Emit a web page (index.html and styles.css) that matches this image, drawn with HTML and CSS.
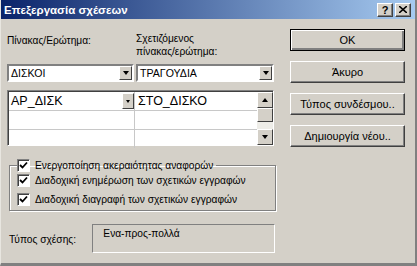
FILE: index.html
```html
<!DOCTYPE html>
<html lang="el">
<head>
  <meta charset="UTF-8" />
  <title>Επεξεργασία σχέσεων</title>
  <link rel="stylesheet" href="styles.css">
</head>
<body>
  <div class="window">
    <div class="titlebar">
      <span class="title">Επεξεργασία σχέσεων</span>
      <div class="caption-btns">
        <span class="cap-btn help">?</span>
        <span class="cap-btn close">
          <svg width="8" height="7" viewBox="0 0 8 7"><path d="M0 0 L8 7 M8 0 L0 7" stroke="#000" stroke-width="1.6"/></svg>
        </span>
      </div>
    </div>

    <div class="content">
      <div class="left">
        <div class="labels">
          <div class="col1 lbl first">Πίνακας/Ερώτημα:</div>
          <div class="col2 lbl">Σχετιζόμενος<br>πίνακας/ερώτημα:</div>
        </div>

        <div class="combos">
          <div class="combo col1"><span>ΔΙΣΚΟΙ</span><span class="drop"><i></i></span></div>
          <div class="combo col2"><span>ΤΡΑΓΟΥΔΙΑ</span><span class="drop"><i></i></span></div>
        </div>

        <div class="grid">
          <div class="rows">
            <div class="row">
              <div class="cell c1">ΑΡ_ΔΙΣΚ<span class="mini-drop"><i></i></span></div>
              <div class="cell c2">ΣΤΟ_ΔΙΣΚΟ</div>
            </div>
            <div class="row">
              <div class="cell c1"></div>
              <div class="cell c2"></div>
            </div>
            <div class="row last">
              <div class="cell c1"></div>
              <div class="cell c2"></div>
            </div>
          </div>
          <div class="scroll">
            <span class="sb-btn"><i class="up"></i></span>
            <span class="sb-thumb"></span>
            <span class="sb-track"></span>
            <span class="sb-btn"><i></i></span>
          </div>
        </div>

        <fieldset class="group">
          <legend><span class="chk"><svg width="9" height="9" viewBox="0 0 9 9"><path d="M1 4 L3.5 6.5 L8 1.5" fill="none" stroke="#000" stroke-width="1.8"/></svg></span>Ενεργοποίηση ακεραιότητας αναφορών</legend>
          <div class="opt"><span class="chk"><svg width="9" height="9" viewBox="0 0 9 9"><path d="M1 4 L3.5 6.5 L8 1.5" fill="none" stroke="#000" stroke-width="1.8"/></svg></span>Διαδοχική ενημέρωση των σχετικών εγγραφών</div>
          <div class="opt"><span class="chk"><svg width="9" height="9" viewBox="0 0 9 9"><path d="M1 4 L3.5 6.5 L8 1.5" fill="none" stroke="#000" stroke-width="1.8"/></svg></span>Διαδοχική διαγραφή των σχετικών εγγραφών</div>
        </fieldset>

        <div class="type-row">
          <span class="type-lbl">Τύπος σχέσης:</span>
          <div class="type-box">Ενα-προς-πολλά</div>
        </div>
      </div>

      <div class="right">
        <div class="btn default">OK</div>
        <div class="btn">Άκυρο</div>
        <div class="btn">Τύπος συνδέσμου..</div>
        <div class="btn">Δημιουργία νέου..</div>
      </div>
    </div>
  </div>
</body>
</html>
```

FILE: styles.css
```css
body { margin: 0; font-family: "Liberation Sans", Arial, sans-serif; font-size: 10.2px; color: #000; }
.window { width: 417px; height: 266px; box-sizing: border-box; background: #d4d0c8; border-right: 2px solid #808080; border-bottom: 3px solid #808080; border-left: 1px solid #e8e6e0; overflow: hidden; }

.titlebar { height: 19px; display: flex; align-items: center; justify-content: space-between; background: linear-gradient(to right, #0a246a, #a6caf0); padding: 0 4px 0 3px; }
.title { color: #fff; font-weight: bold; font-size: 11.5px; }
.caption-btns { display: flex; gap: 2px; }
.cap-btn { width: 16px; height: 14px; box-sizing: border-box; background: #d4d0c8; border: 1px solid; border-color: #fff #404040 #404040 #fff; box-shadow: inset -1px -1px #808080; display: flex; align-items: center; justify-content: center; font-weight: bold; font-size: 11px; }

.content { display: flex; padding: 10px 0 0 6px; }
.left { width: 268px; padding-top: 3px; }
.right { margin-left: 15px; width: 115px; display: flex; flex-direction: column; gap: 10px; font-size: 11px; }

.labels { display: flex; height: 26px; line-height: 13px; }
.col1 { width: 127px; }
.col2 { width: 138px; margin-left: 2px; }
.lbl.first { padding-top: 2px; }

.combos { display: flex; margin-top: 6px; }
.combo { height: 18px; box-sizing: border-box; background: #fff; border: 2px solid; border-color: #808080 #fff #fff #808080; display: flex; align-items: center; justify-content: space-between; font-size: 10.6px; padding-left: 2px; }
.drop { width: 13px; height: 14px; box-sizing: border-box; background: #d4d0c8; border: 1px solid; border-color: #fff #404040 #404040 #fff; display: flex; align-items: center; justify-content: center; }
.drop i, .mini-drop i, .sb-btn i { width: 0; height: 0; border-left: 3.5px solid transparent; border-right: 3.5px solid transparent; border-top: 4px solid #000; }
.sb-btn i.up { border-top: 0; border-bottom: 4px solid #000; }

.grid { margin-top: 8px; width: 267px; height: 56px; box-sizing: border-box; background: #fff; border: 1px solid; border-color: #808080 #fff #fff #808080; box-shadow: inset 1px 1px #404040; display: flex; padding: 1px 0 0 1px; }
.rows { flex: 1; }
.row { display: flex; height: 18px; border-bottom: 1px solid #c8c8c8; }
.row.last { border-bottom: 0; }
.cell { box-sizing: border-box; font-size: 12.5px; line-height: 18px; padding-left: 2px; }
.c1 { width: 126px; border-right: 1px solid #c8c8c8; display: flex; justify-content: space-between; align-items: center; }
.c2 { flex: 1; padding-left: 3px; }
.mini-drop { width: 12px; height: 16px; box-sizing: border-box; background: #d4d0c8; border: 1px solid; border-color: #fff #404040 #404040 #fff; display: flex; align-items: center; justify-content: center; }
.mini-drop i { border-left-width: 2.5px; border-right-width: 2.5px; border-top-width: 3px; }

.scroll { width: 16px; display: flex; flex-direction: column; background: #eeede8; }
.sb-btn, .sb-thumb { height: 16px; box-sizing: border-box; background: #d4d0c8; border: 1px solid; border-color: #fff #404040 #404040 #fff; display: flex; align-items: center; justify-content: center; }
.sb-thumb { height: 14px; }
.sb-track { flex: 1; }

.group { margin: 13px 0 0 2px; padding: 0 0 3px 8px; width: 267px; height: 52px; box-sizing: border-box; border: 1px solid #808080; box-shadow: inset 1px 1px #fff, 1px 1px #fff; }
.group legend { padding: 0 3px 0 0; display: flex; align-items: center; margin-left: -1px; }
.chk { width: 13px; height: 13px; box-sizing: border-box; background: #fff; border: 1px solid; border-color: #808080 #fff #fff #808080; box-shadow: inset 1px 1px #404040; display: inline-flex; align-items: center; justify-content: center; margin-right: 5px; }
.opt { display: flex; align-items: center; height: 19px; margin-left: -1px; }
.opt:first-of-type { margin-top: -1px; }

.type-row { display: flex; align-items: center; margin-top: 13px; }
.type-lbl { width: 84px; padding: 2px 0 0 2px; }
.type-box { width: 184px; height: 29px; box-sizing: border-box; border: 1px solid; border-color: #808080 #fff #fff #808080; padding: 3px 0 0 10px; }

.btn { height: 22px; box-sizing: border-box; background: #d4d0c8; border: 1px solid; border-color: #fff #404040 #404040 #fff; box-shadow: inset -1px -1px #808080; display: flex; align-items: center; justify-content: center; }
.btn.default { border: 1px solid #000; box-shadow: inset 1px 1px #fff, inset -2px -2px #808080; }
```
